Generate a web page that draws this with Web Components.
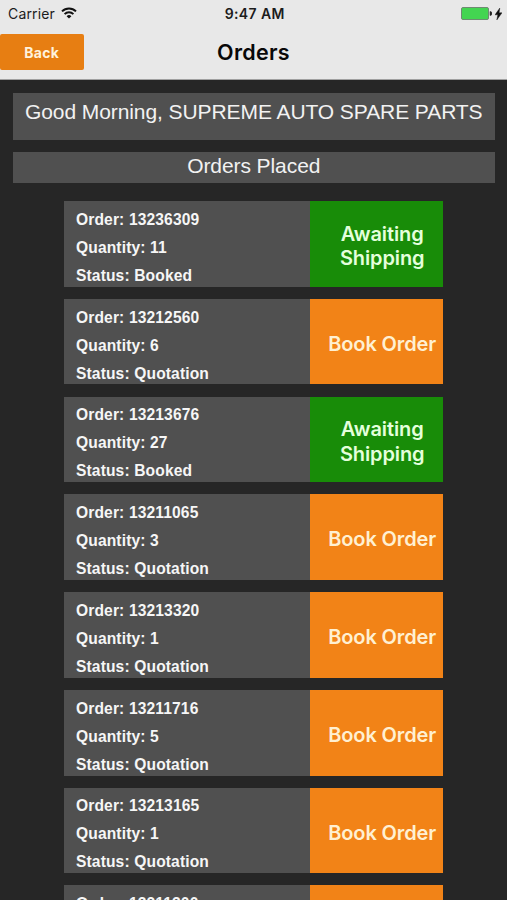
<!DOCTYPE html>
<html lang="en">
	<head>
		<meta charset="utf-8" />
		<meta name="viewport" content="width=device-width, initial-scale=1" />

		<title>Orders</title>

		<style>
			html,
			body {
				height: 100%;
				margin: 0;
				overflow: hidden;

				background: #262626;
				font-family: 'Liberation Sans', Arial, sans-serif;
			}
		</style>
	</head>
	<body>
		<orders-screen></orders-screen>

		<script>
			function define(name, html, setup) {
				const template = document.createElement('template');
				template.innerHTML = html;

				customElements.define(name, class extends HTMLElement {

					constructor() {
						super();

						this.attachShadow({ mode: 'open' });
						this.shadowRoot.appendChild(template.content.cloneNode(true));
					}

					connectedCallback() {
						if (setup) setup(this);
					}

				});
			}

			define('status-bar', `
				<style>
					:host {
						display: grid;
						grid-template-columns: 1fr auto 1fr;
						align-items: center;
						height: 27px;
						padding: 0 5.5px 0 8px;

						color: #1c1c1c;
						font: 400 14px/27px Inter, sans-serif;
					}

					.carrier,
					.power {
						display: flex;
						align-items: center;
					}

					.carrier {
						gap: 6px;
						letter-spacing: 0.15px;
					}

					.carrier svg {
						margin-top: -2px;
					}

					.time {
						font-weight: 600;
						letter-spacing: 0.4px;
					}

					.power {
						justify-content: flex-end;
						gap: 3px;
					}

					svg {
						display: block;
					}
				</style>
				<div class="carrier">
					<span>Carrier</span>
					<svg width="16" height="12" viewBox="0 0 16 12" fill="none" stroke="#111" stroke-width="2">
						<path d="M1 4.4a10 10 0 0 1 14 0M3.6 7.1a6.2 6.2 0 0 1 8.8 0" />
						<path d="M8 11.6 5.6 9.2a3.4 3.4 0 0 1 4.8 0z" fill="#111" stroke="none" />
					</svg>
				</div>
				<span class="time">9:47 AM</span>
				<div class="power">
					<svg width="31" height="13" viewBox="0 0 31 13">
						<rect x="0.5" y="0.5" width="27" height="12" rx="1.5" fill="#43d551" stroke="#6f8a72" />
						<path d="M29 4.5a2 2 0 0 1 0 4z" fill="#222" stroke="#222" stroke-width="0.6" />
					</svg>
					<svg width="7" height="12" viewBox="0 0 7 12">
						<path d="M4.8 0 0 6.8h2.8L1.8 12 7 4.8H4.1z" fill="#111" stroke="#111" stroke-width="0.4" />
					</svg>
				</div>
			`);

			define('nav-bar', `
				<style>
					:host {
						display: grid;
						grid-template-columns: 83.5px 1fr 83.5px;
						align-items: center;
						height: 50px;
						padding-bottom: 2px;
					}

					button {
						height: 36px;
						margin: 0;
						padding: 1px 0 0;
						border: 0;
						border-radius: 2px;

						background: #e77e12;
						color: #fff2dc;
						font: 700 14px/35px Inter, sans-serif;
						letter-spacing: 0.3px;
					}

					h1 {
						margin: 0;

						color: #080808;
						font: 600 21.5px/36px Inter, sans-serif;
						letter-spacing: 0.3px;
						text-align: center;
					}
				</style>
				<button><slot name="back"></slot></button>
				<h1><slot></slot></h1>
			`);

			define('info-banner', `
				<style>
					:host {
						display: block;
						box-sizing: border-box;

						background: #505050;
						color: #f2f2f2;
						font-size: 21px;
						letter-spacing: -0.08px;
						text-align: center;
						white-space: nowrap;
					}
				</style>
				<slot></slot>
			`);

			define('order-card', `
				<style>
					:host {
						display: grid;
						grid-template-columns: 246px 1fr;
						height: 85.6px;
					}

					.details {
						padding: 4.8px 0 0 11.8px;
						overflow: hidden;

						background: #505050;
						color: #f6f6f6;
						font: 700 15.6px/28px 'Liberation Sans', Arial, sans-serif;
						letter-spacing: 0.13px;
						white-space: nowrap;
					}

					.action {
						display: flex;
						align-items: center;
						justify-content: center;
						padding: 5px 0 0 11px;

						background: #f28317;
						color: #fff0d2;
						font: 600 20px/24.5px Inter, sans-serif;
						letter-spacing: -0.12px;
						text-align: center;
					}

					:host([status="Booked"]) .action {
						background: #188c08;
						color: #e4ffdc;
					}
				</style>
				<div class="details">
					<div>Order: <span class="js-number"></span></div>
					<div>Quantity: <span class="js-quantity"></span></div>
					<div>Status: <span class="js-status"></span></div>
				</div>
				<div class="action"><span class="js-action"></span></div>
			`, (el) => {
				for (const key of ['number', 'quantity', 'status']) {
					el.shadowRoot.querySelector('.js-' + key).textContent = el.getAttribute(key);
				}

				el.shadowRoot.querySelector('.js-action').innerHTML =
					el.getAttribute('status') === 'Booked' ? 'Awaiting<br>Shipping' : 'Book Order';
			});

			define('orders-screen', `
				<style>
					:host {
						display: block;
						height: 900px;
						overflow: hidden;
					}

					header {
						box-sizing: border-box;
						height: 80px;
						border-bottom: 1px solid #a0a0a0;

						background: #e8e8e8;
					}

					main {
						padding: 12.5px 12.5px 0 13px;
					}

					.greeting {
						height: 47.5px;
						margin-bottom: 12px;

						line-height: 37px;
					}

					.heading {
						height: 31px;
						margin-bottom: 18px;

						line-height: 28px;
					}

					.list {
						display: grid;
						row-gap: 12.2px;
						width: 379px;
						margin-left: 51.2px;
					}
				</style>
				<header>
					<status-bar></status-bar>
					<nav-bar><span slot="back">Back</span>Orders</nav-bar>
				</header>
				<main>
					<info-banner class="greeting">Good Morning, SUPREME AUTO SPARE PARTS</info-banner>
					<info-banner class="heading">Orders Placed</info-banner>
					<div class="list">
						<order-card number="13236309" quantity="11" status="Booked"></order-card>
						<order-card number="13212560" quantity="6" status="Quotation"></order-card>
						<order-card number="13213676" quantity="27" status="Booked"></order-card>
						<order-card number="13211065" quantity="3" status="Quotation"></order-card>
						<order-card number="13213320" quantity="1" status="Quotation"></order-card>
						<order-card number="13211716" quantity="5" status="Quotation"></order-card>
						<order-card number="13213165" quantity="1" status="Quotation"></order-card>
						<order-card number="13211300" quantity="1" status="Quotation"></order-card>
					</div>
				</main>
			`);
		</script>
	</body>
</html>
